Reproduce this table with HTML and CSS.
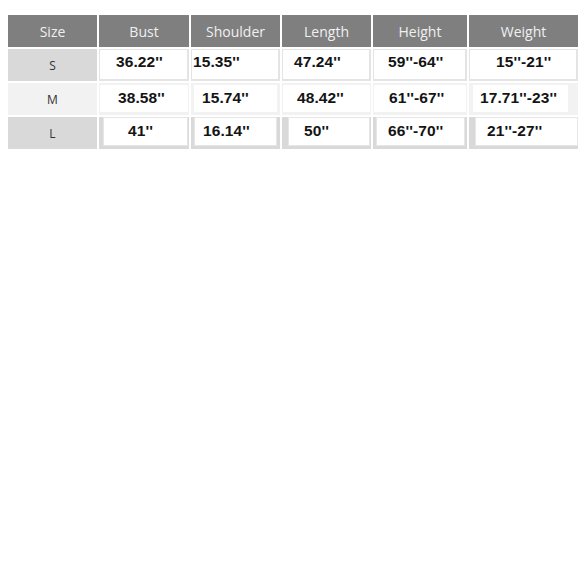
FILE: index.html
```html
<!DOCTYPE html>
<html>
<head>
<meta charset="utf-8">
<link rel="stylesheet" href="styles.css">
</head>
<body>
<div class="chart">
  <div class="hd">Size</div>
  <div class="hd">Bust</div>
  <div class="hd">Shoulder</div>
  <div class="hd">Length</div>
  <div class="hd">Height</div>
  <div class="hd">Weight</div>

  <div class="sz sz-dark">S</div>
  <div class="cell r-s"><div class="box ind-16">36.22''</div></div>
  <div class="cell r-s"><div class="box ind-1">15.35''</div></div>
  <div class="cell r-s"><div class="box ind-11">47.24''</div></div>
  <div class="cell r-s"><div class="box ind-14">59''-64''</div></div>
  <div class="cell r-s"><div class="box ind-26">15''-21''</div></div>

  <div class="sz sz-light">M</div>
  <div class="cell r-m"><div class="box ind-18">38.58''</div></div>
  <div class="cell r-m m-sh"><div class="box ind-8">15.74''</div></div>
  <div class="cell r-m"><div class="box ind-14">48.42''</div></div>
  <div class="cell r-m"><div class="box ind-15">61''-67''</div></div>
  <div class="cell r-m m-wt"><div class="box ind-7">17.71''-23''</div></div>

  <div class="sz sz-dark">L</div>
  <div class="cell r-l l-bu"><div class="box ind-24">41''</div></div>
  <div class="cell r-l l-sh"><div class="box ind-8">16.14''</div></div>
  <div class="cell r-l l-le"><div class="box ind-15">50''</div></div>
  <div class="cell r-l"><div class="box ind-11">66''-70''</div></div>
  <div class="cell r-l l-wt"><div class="box ind-11">21''-27''</div></div>
</div>
</body>
</html>
```
FILE: styles.css
```css
html, body {
  margin: 0;
  padding: 0;
  background: #ffffff;
}
body {
  padding: 15px 0 0 8px;
}
.chart {
  display: grid;
  grid-template-columns: 89px 90px 89px 89px 94px 109px;
  grid-auto-rows: 32px;
  column-gap: 2px;
  row-gap: 2px;
}
.hd {
  background: #7f7f7f;
  color: #f0f0f0;
  font-family: "Open Sans", "DejaVu Sans", sans-serif;
  font-size: 14px;
  display: flex;
  align-items: center;
  justify-content: center;
}
.sz {
  color: #333333;
  font-family: "Open Sans", "DejaVu Sans", sans-serif;
  font-size: 12px;
  display: flex;
  align-items: center;
  justify-content: center;
}
.sz-dark { background: #d9d9d9; }
.sz-light { background: #f2f2f2; }

.cell {
  box-sizing: border-box;
  display: flex;
}
.box {
  flex: 1;
  background: #ffffff;
  box-sizing: border-box;
  font-family: "Liberation Sans", Arial, sans-serif;
  font-weight: bold;
  font-size: 15.5px;
  letter-spacing: 0.1px;
  color: #141414;
  line-height: 17px;
}
.r-s {
  background: #e4e4e4;
  padding: 1px 2px 2px 1px;
}
.r-s .box {
  padding-top: 3px;
}
.r-m {
  background: #f2f2f2;
  padding: 2px 1px 3px 1px;
}
.r-m .box {
  padding-top: 4px;
}
.r-l {
  background: #d9d9d9;
  padding: 0 2px 3px 3px;
}
.r-l .box {
  border: 1px solid #e6e6e6;
  padding-top: 4px;
}
.m-sh { padding-left: 3px; padding-right: 3px; }
.m-wt { padding-left: 4px; padding-right: 10px; }
.l-bu { padding-left: 4px; padding-right: 1px; }
.l-sh { padding-left: 3px; padding-right: 3px; }
.l-le { padding-left: 6px; padding-right: 1px; }
.l-wt { padding-left: 6px; padding-right: 0; }

.ind-1 { padding-left: 1px; }
.ind-7 { padding-left: 7px; }
.ind-8 { padding-left: 8px; }
.ind-11 { padding-left: 11px; }
.ind-14 { padding-left: 14px; }
.ind-15 { padding-left: 15px; }
.ind-16 { padding-left: 16px; }
.ind-18 { padding-left: 18px; }
.ind-24 { padding-left: 24px; }
.ind-26 { padding-left: 26px; }
```
